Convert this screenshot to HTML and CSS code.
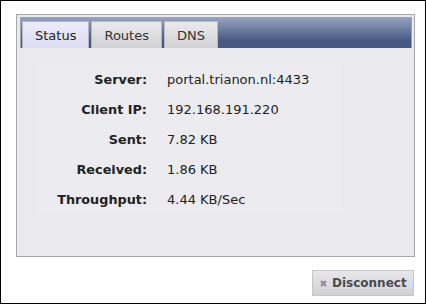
FILE: index.html
```html
<!DOCTYPE html>
<html lang="en">
<head>
    <meta charset="UTF-8">
    <title>VPN Status</title>
    <link rel="stylesheet" href="styles.css">
</head>
<body>
    <div class="window">
        <div class="panel">
            <div class="tabbar">
                <div class="tab active">Status</div>
                <div class="tab">Routes</div>
                <div class="tab">DNS</div>
            </div>
            <div class="content">
                <table class="info">
                    <tr><th>Server:</th><td>portal.trianon.nl:4433</td></tr>
                    <tr><th>Client IP:</th><td>192.168.191.220</td></tr>
                    <tr><th>Sent:</th><td>7.82 KB</td></tr>
                    <tr><th>Received:</th><td>1.86 KB</td></tr>
                    <tr><th>Throughput:</th><td>4.44 KB/Sec</td></tr>
                </table>
            </div>
        </div>
        <div class="actions">
            <button class="btn">
                <svg width="7" height="7" viewBox="0 0 7 7"><path d="M1 1 L6 6 M6 1 L1 6" stroke="#8a8a8e" stroke-width="2"/></svg>
                Disconnect
            </button>
        </div>
    </div>
</body>
</html>
```

FILE: styles.css
```css
html, body {
    margin: 0;
    padding: 0;
    background: #fff;
}
.window {
    width: 424px;
    height: 302px;
    border: 1px solid #000;
    background: #fff;
    font-family: "DejaVu Sans", Verdana, sans-serif;
    font-size: 13px;
    color: #222;
}
.panel {
    margin: 13px 0 0 15px;
    width: 397px;
    height: 241px;
    border: 1px solid #a8a8ac;
    background: #eaeaee;
    display: flex;
    flex-direction: column;
}
.tabbar {
    margin: 2px 2px 0 3px;
    height: 30px;
    border: 1px solid #9aa2b6;
    border-bottom: none;
    background: linear-gradient(#95a1bd, #475a85 75%, #455884);
    display: flex;
    align-items: flex-end;
    gap: 2px;
    padding-left: 1px;
}
.tab {
    height: 27px;
    box-sizing: border-box;
    padding: 6px 12px 0 12px;
    color: #333;
    background: linear-gradient(#eaeaec, #d2d2d6);
    border: 1px solid #b8b8c0;
    border-bottom: none;
}
.tab.active {
    background: linear-gradient(#ececfa, #dcdcf4);
    color: #222;
}
.content {
    flex: 1;
    padding: 16px 0 0 21px;
}
.info {
    border-collapse: collapse;
    width: 305px;
    background: #ececf0;
}
.info th {
    text-align: right;
    font-weight: bold;
    font-size: 12.8px;
    width: 109px;
    padding: 0 20px 0 0;
    height: 30px;
    white-space: nowrap;
}
.info td {
    padding: 0;
    white-space: nowrap;
}
.actions {
    display: flex;
    justify-content: flex-end;
    padding: 13px 11px 0 0;
}
.btn {
    width: 102px;
    height: 26px;
    border: 1px solid #c6c6ca;
    background: linear-gradient(#e8e8ec, #d2d2d6);
    font-family: "DejaVu Sans", Verdana, sans-serif;
    font-size: 12px;
    font-weight: bold;
    color: #4a4a4e;
    display: flex;
    align-items: center;
    gap: 5px;
    padding: 0 0 0 7px;
}
```
